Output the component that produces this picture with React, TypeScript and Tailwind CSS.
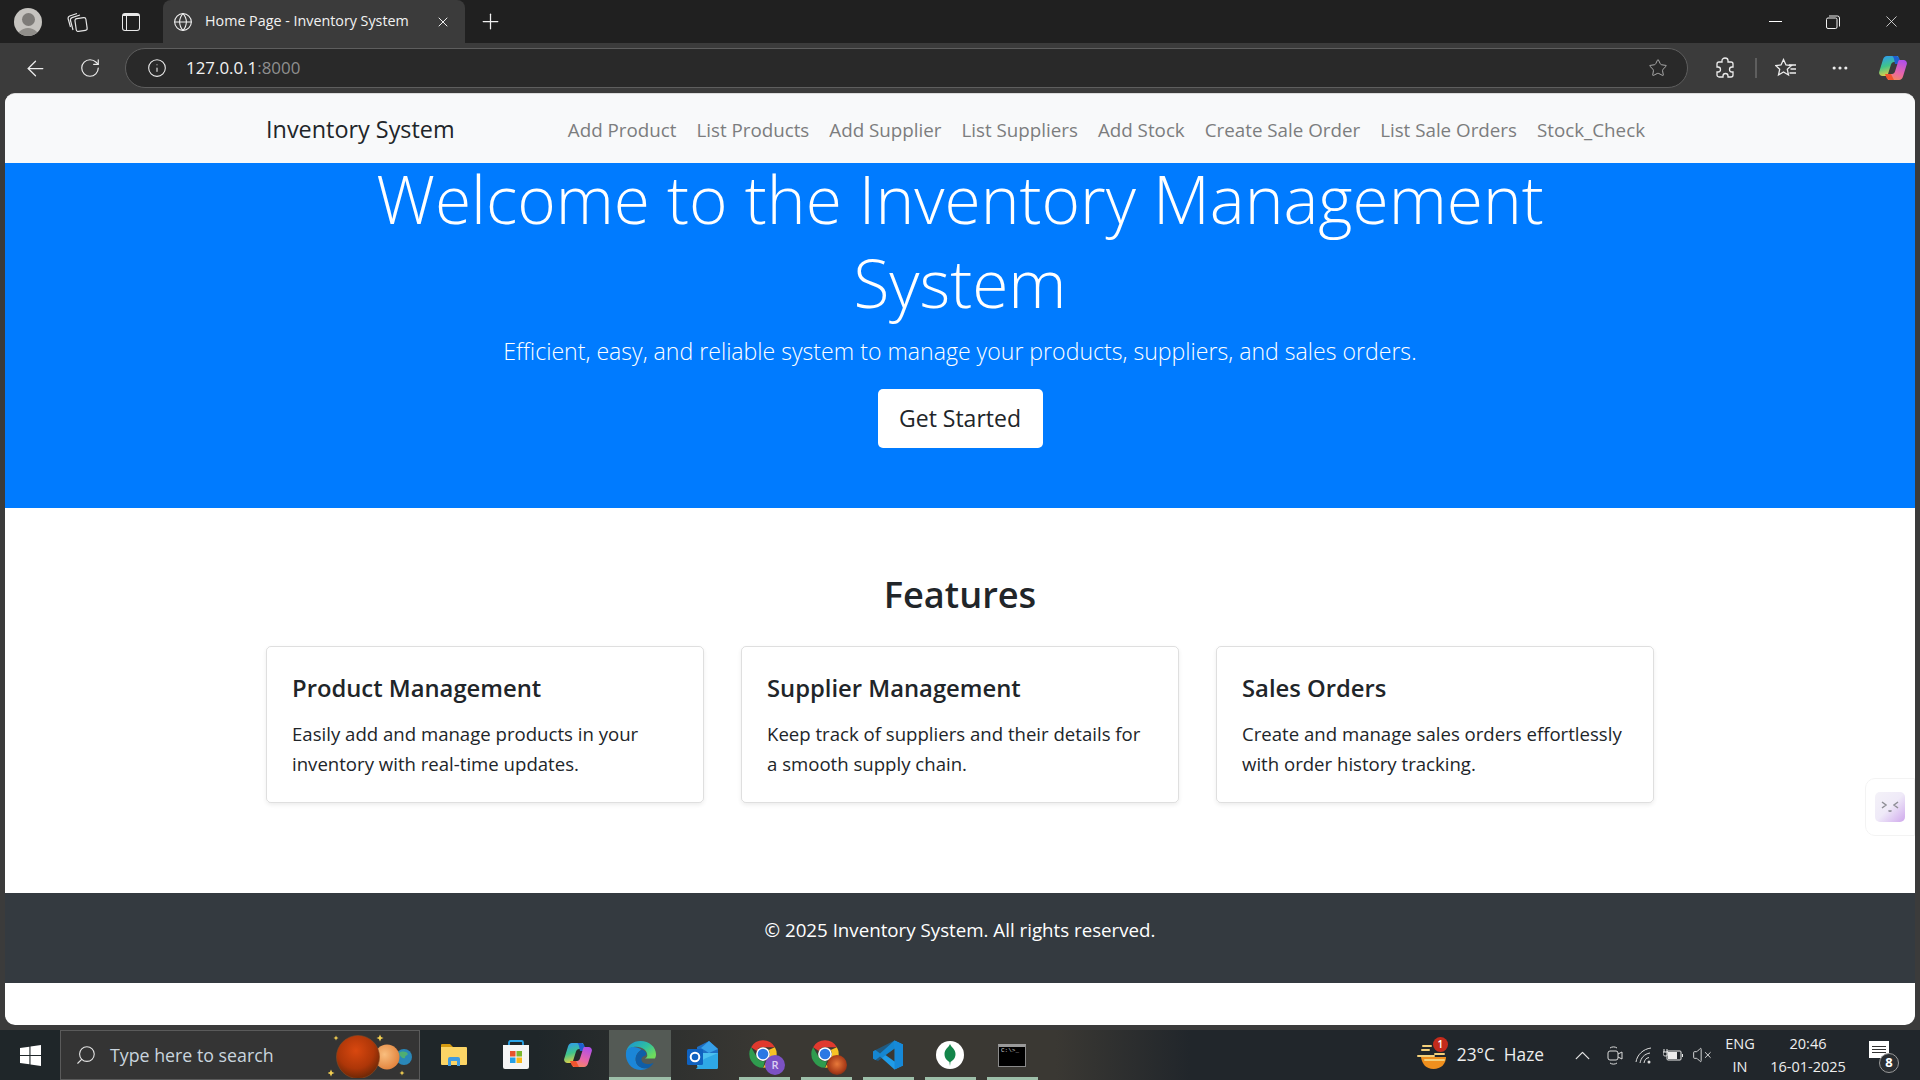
import { ArrowLeft, ChevronUp, Globe, Info, MoreHorizontal, Plus, RotateCw, Search, Star, VolumeX, X } from "lucide-react";

const font = "font-['Open_Sans','Liberation_Sans',sans-serif]";

const navLinks = ["Add Product", "List Products", "Add Supplier", "List Suppliers", "Add Stock", "Create Sale Order", "List Sale Orders", "Stock_Check"];

const features = [
  { title: "Product Management", lines: ["Easily add and manage products in your", "inventory with real-time updates."] },
  { title: "Supplier Management", lines: ["Keep track of suppliers and their details for", "a smooth supply chain."] },
  { title: "Sales Orders", lines: ["Create and manage sales orders effortlessly", "with order history tracking."] },
];

const CopilotLogo = ({ size, id }: { size: number; id: string }) => (
  <svg width={size} height={size} viewBox="0 0 28 28">
    <defs>
      <linearGradient id={`${id}a`} x1="0.2" y1="0" x2="0.5" y2="1">
        <stop offset="0" stopColor="#2f9bf0" />
        <stop offset="0.5" stopColor="#3fc48a" />
        <stop offset="1" stopColor="#f4d03f" />
      </linearGradient>
      <linearGradient id={`${id}b`} x1="0.7" y1="0" x2="0.3" y2="1">
        <stop offset="0" stopColor="#b04fe8" />
        <stop offset="0.6" stopColor="#e866a8" />
        <stop offset="1" stopColor="#f58a5a" />
      </linearGradient>
    </defs>
    <path d="M8 2h11l2 6h-6c-1.500 0-2.500 1-3 2.500L9 20c-.5 1.500-1.500 2-3 2H3.500C1 22-.5 20 .3 17.500L4 5.500C4.700 3.300 6 2 8 2z" fill={`url(#${id}a)`} />
    <path d="M13 2h4c1.500 0 2.800 1 3.300 2.500L22 10h-6l-1-5c-.3-1.500-1-3-2-3z" fill="#1f5fd0" />
    <path d="M20 6h4.500C27 6 28.500 8 27.700 10.500L24 22.500c-.7 2.200-2 3.500-4 3.500H9l-2-6h6c1.500 0 2.500-1 3-2.500L19 8c.2-.8.500-1.500 1-2z" fill={`url(#${id}b)`} />
    <path d="M6 20h6l3 6h-3.500C9 26 7.500 24.500 7 22.500z" fill="#f0542e" />
  </svg>
);

const Edge = () => (
  <svg width="31" height="31" viewBox="0 0 32 32">
    <defs>
      <linearGradient id="edgeTop" x1="0" y1="0" x2="1" y2="0.7">
        <stop offset="0" stopColor="#1a8fd8" />
        <stop offset="0.6" stopColor="#2fc0a0" />
        <stop offset="1" stopColor="#6fdb5c" />
      </linearGradient>
    </defs>
    <path d="M16 1C8 1 2 6 1 13c2-4 6-6 11-6 6 0 11 4 11 9 0 1.500-1 2.500-2.500 3h10.300C31.500 18 32 17 32 15 32 7 25 1 16 1z" fill="url(#edgeTop)" />
    <path d="M1 13c-1 9 5 18 15 18 3 0 6-.8 8-2-5 1-11-1-12.500-6C10 18 12 13 17 10c-7-5-15-3-16 3z" fill="#1b86d8" />
    <path d="M17 10c-5 3-7 8-5.500 13 1.500 5 7.500 7 12.500 6 2.500-1.500 4.500-3.500 5.500-5.500-4 2.500-12 2-12.500-3-.2-2.500 1.500-3.500 3-4 2-.8 3-2.500 1-4.500-1-1-2.500-2-4-2z" fill="#0f5ea8" />
  </svg>
);

const Outlook = () => (
  <svg width="31" height="28" viewBox="0 0 31 28">
    <path d="M10 6 22 0l9 8v6H10z" fill="#1d6fc4" />
    <path d="M22 0l9 8-9 4-8-5z" fill="#37a0e8" />
    <path d="M10 12h21v14a2 2 0 0 1-2 2H14c-2 0-4-2-4-4z" fill="#4cc0f0" />
    <path d="M17 18l14-6v14a2 2 0 0 1-2 2H9z" fill="#2ea8e6" />
    <rect x="0" y="8" width="16" height="16" rx="1.500" fill="#0f62c0" />
    <circle cx="8" cy="16" r="4.300" fill="none" stroke="#fff" strokeWidth="2" />
  </svg>
);

const Chrome = ({ badge }: { badge: "r" | "photo" }) => (
  <div className="relative w-[32px] h-[32px]">
    <svg width="30" height="30" viewBox="0 0 48 48">
      <path d="M24 2a22 22 0 0 1 19 11H24a11 11 0 0 0-10 6L5 13A22 22 0 0 1 24 2z" fill="#e0392e" />
      <path d="M43 13a22 22 0 0 1-19 33l9.500-16.500A11 11 0 0 0 33 17.500z" fill="#f7c325" />
      <path d="M5 13l9.500 16.500A11 11 0 0 0 27 35l-3 11A22 22 0 0 1 5 13z" fill="#2f9c4e" />
      <circle cx="24" cy="24" r="11" fill="#fff" />
      <circle cx="24" cy="24" r="8.500" fill="#2b78e4" />
    </svg>
    {badge === "r" ? (
      <span className={`absolute right-[-5px] bottom-[-4px] w-[20px] h-[20px] rounded-full bg-[#7c52c4] text-[#dcd0f5] text-[11px] font-semibold flex items-center justify-center ${font}`}>R</span>
    ) : (
      <span className="absolute right-[-5px] bottom-[-4px] w-[20px] h-[20px] rounded-full bg-[radial-gradient(circle_at_50%_45%,#e8793a,#a83b18_60%,#3b2018)]" />
    )}
  </div>
);

const VsCode = () => (
  <svg width="30" height="30" viewBox="0 0 30 30">
    <path d="M21.500 0.500 30 4.500v21l-8.500 4L7 16.500l-4.500 3.500L0 18.500v-7L2.500 10 7 13.500z" fill="#1f9ce8" />
    <path d="M21.500.5 30 4.500v21l-8.500 4z" fill="#1689d8" />
    <path d="M21.500 8.500 12.500 15l9 6.500z" fill="#3a3833" />
    <path d="M0 11.500 2.500 10l19-9.500V8.500L5 21l-2.500-1L0 18.500z" fill="#0d74bd" opacity="0.55" />
  </svg>
);

const Mongo = () => (
  <div className="w-[28px] h-[28px] rounded-full bg-white flex items-center justify-center">
    <svg width="12" height="22" viewBox="0 0 12 22">
      <path d="M6 0c1 3 5.500 5 5.500 10S8 17 6.500 18L6 22l-.6-4C4 17 .5 15 .5 10S5 3 6 0z" fill="#13854a" />
    </svg>
  </div>
);

const Cmd = () => (
  <div className="w-[28px] h-[23px] bg-black border border-[#8a8a8a] border-t-[3px] border-t-[#9a9a9a] pl-[2px] leading-none">
    <span className="block text-[6px] text-[#cfcfcf] font-['Liberation_Mono',monospace] leading-[8px]">C:\&gt;_</span>
  </div>
);

const Folder = () => (
  <svg width="26" height="24" viewBox="0 0 26 24">
    <path d="M0 2a1 1 0 0 1 1-1h8l3 3h-12z" fill="#d49a10" />
    <path d="M0 4h25a1 1 0 0 1 1 1v16a1 1 0 0 1-1 1H1a1 1 0 0 1-1-1z" fill="#fbd465" />
    <path d="M7 23v-7a2 2 0 0 1 2-2h8a2 2 0 0 1 2 2v7h-3v-5h-6v5z" fill="#3f9be0" />
  </svg>
);

const Store = () => (
  <svg width="28" height="30" viewBox="0 0 28 30">
    <path d="M7 5V2.500A1.500 1.500 0 0 1 8.500 1h11A1.500 1.500 0 0 1 21 2.500V5" fill="none" stroke="#2aa4e8" strokeWidth="1.800" />
    <path d="M1 5h26v22a2 2 0 0 1-2 2H3a2 2 0 0 1-2-2z" fill="#f5f5f5" />
    <rect x="8" y="11" width="5.500" height="5.500" fill="#e8532e" />
    <rect x="14.500" y="11" width="5.500" height="5.500" fill="#7cb82f" />
    <rect x="8" y="17.500" width="5.500" height="5.500" fill="#25a0e8" />
    <rect x="14.500" y="17.500" width="5.500" height="5.500" fill="#fab818" />
  </svg>
);

const Planets = () => (
  <svg width="84" height="46" viewBox="0 0 84 46">
    <defs>
      <radialGradient id="mars" cx="0.45" cy="0.35" r="0.7">
        <stop offset="0" stopColor="#d9480f" />
        <stop offset="0.6" stopColor="#ad3608" />
        <stop offset="1" stopColor="#5f2406" />
      </radialGradient>
      <radialGradient id="venus" cx="0.4" cy="0.4" r="0.7">
        <stop offset="0" stopColor="#f9be7e" />
        <stop offset="1" stopColor="#e07d36" />
      </radialGradient>
    </defs>
    <circle cx="76" cy="25" r="8" fill="#2a87b8" />
    <path d="M71 21c3-2 7-2 9 1-1 2-3 1-3 4-2 1-5-1-6-5z" fill="#4fae72" />
    <circle cx="59" cy="25" r="12.500" fill="url(#venus)" />
    <circle cx="30" cy="25" r="21.500" fill="url(#mars)" stroke="#8c4a22" strokeWidth="0.600" />
    {[[8, 6, 2.500], [52, 6, 3.500], [3, 41, 3.500], [74, 41, 2.500]].map(([x, y, r]) => (
      <path key={x} d={`M${x} ${y - r}L${x + r * 0.3} ${y - r * 0.3}L${x + r} ${y}L${x + r * 0.3} ${y + r * 0.3}L${x} ${y + r}L${x - r * 0.3} ${y + r * 0.3}L${x - r} ${y}L${x - r * 0.3} ${y - r * 0.3}Z`} fill="#f3cf52" />
    ))}
  </svg>
);

const Weather = () => (
  <div className="relative w-[30px] h-[30px]">
    <svg width="30" height="30" viewBox="0 0 30 30">
      <path d="M4 17h25c0 7-5 12-12.500 12S5 24 4 17z" fill="#ef8f1d" />
      <path d="M6 6h8M5 10h7M1 16h16M8 20h19" stroke="#f3cf7a" strokeWidth="2" strokeLinecap="round" />
      <path d="M18 14h9" stroke="#f3cf7a" strokeWidth="2" strokeLinecap="round" />
    </svg>
    <span className={`absolute right-[-1px] top-[-3px] w-[15px] h-[15px] rounded-full bg-[#c42b1c] text-white text-[10px] font-semibold flex items-center justify-center ${font}`}>1</span>
  </div>
);

const taskIcons = [
  { el: <Folder />, open: false },
  { el: <Store />, open: false },
  { el: <CopilotLogo size={28} id="cpt" />, open: false },
  { el: <Edge />, open: false, active: true },
  { el: <Outlook />, open: false },
  { el: <Chrome badge="r" />, open: true },
  { el: <Chrome badge="photo" />, open: true },
  { el: <VsCode />, open: true },
  { el: <Mongo />, open: true },
  { el: <Cmd />, open: true },
];

export default function App() {
  return (
    <div className={`w-[1920px] h-[1080px] overflow-hidden flex flex-col bg-[#3b3b3b] ${font}`}>
      {/* title bar */}
      <div className="h-[43px] bg-[#202020] flex items-end text-white shrink-0">
        <div className="h-[43px] w-[56px] flex items-center justify-center">
          <div className="w-[28px] h-[28px] rounded-full bg-[#c5c3bf] overflow-hidden flex flex-col items-center">
            <div className="w-[13px] h-[13px] rounded-full bg-[#7d7b78] mt-[5px] shrink-0" />
            <div className="w-[24px] h-[14px] rounded-t-full bg-[#908e8a] mt-[2px] shrink-0" />
          </div>
        </div>
        <div className="h-[43px] w-[44px] flex items-center justify-center">
          <svg width="22" height="22" viewBox="0 0 22 22" fill="none" stroke="#e4e4e4" strokeWidth="1.200">
            <rect x="8.500" y="7" width="11" height="13" rx="2" transform="rotate(-8 14 13)" />
            <path d="M6 19 3.500 9.500C3.200 8 4 7 5 6.600L13 4M3.500 16 1.200 8C.8 6.500 1.500 5.500 2.700 5L10 2.500" />
          </svg>
        </div>
        <div className="h-[43px] w-[62px] flex items-center justify-center">
          <div className="w-[18px] h-[18px] rounded-[3px] border border-[#e8e8e8] border-t-[3px] flex">
            <div className="w-[4px] border-r border-[#e8e8e8]" />
          </div>
        </div>
        <div className="h-[43px] w-[302px] ml-px bg-[#3b3b3b] rounded-t-[8px] flex items-center pl-[10px] pr-[14px]">
          <Globe size={20} strokeWidth={1.3} className="text-[#f0f0f0]" />
          <span className="ml-[12px] pb-[2px] text-[14.300px] text-[#f2f2f2] whitespace-nowrap">Home Page - Inventory System</span>
          <X size={16} strokeWidth={1.5} className="ml-auto text-[#f0f0f0]" />
        </div>
        <div className="h-[43px] w-[50px] flex items-center justify-center">
          <Plus size={25} strokeWidth={1.2} className="text-[#f0f0f0]" />
        </div>
        <div className="ml-auto h-[43px] flex items-center text-[#f0f0f0]">
          <div className="w-[58px] flex justify-center"><div className="w-[13px] h-px bg-white" /></div>
          <div className="w-[58px] flex justify-center">
            <svg width="14" height="14" viewBox="0 0 14 14" fill="none" stroke="#f0f0f0" strokeWidth="1">
              <rect x="0.500" y="3" width="10.500" height="10.500" rx="1.500" />
              <path d="M3 1h8.500a2 2 0 0 1 2 2v8.500" />
            </svg>
          </div>
          <div className="w-[58px] flex justify-center"><X size={19} strokeWidth={1} /></div>
        </div>
      </div>

      {/* toolbar */}
      <div className="h-[50px] flex items-center shrink-0 text-[#ececec]">
        <div className="w-[70px] flex justify-center"><ArrowLeft size={25} strokeWidth={1.2} /></div>
        <div className="w-[40px] flex justify-center"><RotateCw size={22} strokeWidth={1.3} /></div>
        <div className="ml-[15px] w-[1563px] h-[40px] rounded-full bg-[#292929] border border-[#5e5e5e] flex items-center pl-[21px] pr-[19px]">
          <Info size={20} strokeWidth={1.3} />
          <span className="ml-[19px] text-[16.900px] text-[#f2f2f2]">127.0.0.1<span className="text-[#8f8f8f]">:8000</span></span>
          <Star size={20} strokeWidth={1.2} className="ml-auto text-[#a8a8a8]" />
        </div>
        <div className="ml-[7px] w-[60px] flex justify-center">
          <svg width="20" height="22" viewBox="0 0 20 22" fill="none" stroke="#ececec" strokeWidth="1.300">
            <path d="M7 3.500C7 2 8.500 1 10 1s3 1 3 2.500V5h3a2 2 0 0 1 2 2v3h-1c-1.500 0-2.500 1-2.500 2.500S15.500 15 17 15h1v3a2 2 0 0 1-2 2h-3v-1c0-1.500-1-2.500-2.500-2.500S8 17.500 8 19v1H4a2 2 0 0 1-2-2v-3h1c1.500 0 2.500-1 2.500-2.500S4.500 10 3 10H2V7a2 2 0 0 1 2-2h3z" />
          </svg>
        </div>
        <div className="w-[1.500px] h-[20px] bg-[#5e5e5e] mr-[12px]" />
        <div className="w-[34px] flex justify-center">
          <svg width="22" height="20" viewBox="0 0 22 20" fill="none" stroke="#ececec" strokeWidth="1.300">
            <path d="M8.500 1.500 11 7l5.500.5-4.200 3.800L13.500 17 8.500 14 3.500 17l1.200-5.700L.8 7.500 6 7z" />
            <path d="M14 7h7M15.500 11h5.500M14.500 15h6.500" />
          </svg>
        </div>
        <div className="w-[75px] flex justify-center"><MoreHorizontal size={20} strokeWidth={1.800} /></div>
        <div className="w-[30px] flex justify-center"><CopilotLogo size={28} id="cpb" /></div>
      </div>

      {/* page */}
      <div className="relative mx-[5px] h-[932px] rounded-t-[10px] rounded-b-[10px] overflow-hidden bg-white flex flex-col shrink-0 border-t border-[#dcdcdc]">
        <nav className="h-[69px] bg-[#f8f9fa] flex items-center pl-[261px] pr-[270px] pt-[2px] shrink-0">
          <span className="text-[23.400px] text-[#212529] whitespace-nowrap">Inventory System</span>
          <div className="ml-auto pt-[1px] flex gap-[20px] text-[18.770px] text-[#7c7d7e] whitespace-nowrap">
            {navLinks.map((l) => (
              <span key={l}>{l}</span>
            ))}
          </div>
        </nav>

        <section className="h-[345px] bg-[#007bff] text-white flex flex-col items-center shrink-0">
          <h1 className="-mt-[6px] text-[65.800px] leading-[84px] font-light text-center">
            Welcome to the Inventory Management
            <br />
            System
          </h1>
          <p className="mt-[8px] text-[23.100px] leading-[36px] font-light">Efficient, easy, and reliable system to manage your products, suppliers, and sales orders.</p>
          <button className="mt-[20px] w-[165px] h-[59px] bg-white rounded-[5px] text-[23px] text-[#212529]">Get Started</button>
        </section>

        <section className="h-[385px] shrink-0 flex flex-col items-center">
          <h2 className="mt-[60px] text-[36.200px] leading-[52px] font-semibold text-[#212529]">Features</h2>
          <div className="mt-[26px] grid grid-cols-3 gap-[37px] w-[1388px]">
            {features.map((f) => (
              <div key={f.title} className="h-[157px] rounded-[5px] border border-[rgba(0,0,0,0.125)] shadow-[0_2px_4px_rgba(0,0,0,0.075)] px-[25px] pt-[26px] text-[#212529]">
                <h3 className="text-[23.800px] leading-[30px] font-semibold">{f.title}</h3>
                <p className="mt-[16px] text-[18.600px] leading-[30px] whitespace-nowrap">
                  {f.lines[0]}
                  <br />
                  {f.lines[1]}
                </p>
              </div>
            ))}
          </div>
        </section>

        <footer className="h-[90px] bg-[#343a40] text-white text-[18.730px] flex items-center justify-center pb-[16px] shrink-0">© 2025 Inventory System. All rights reserved.</footer>

        <div className="absolute right-0 top-[684px] w-[50px] h-[58px] rounded-l-[10px] bg-white border border-[#f3f3f3] flex items-center justify-center">
          <div className="w-[30px] h-[30px] rounded-[5px] bg-gradient-to-br from-[#f4f2f8] via-[#efeaf8] to-[#cfa8ec] flex items-center justify-center">
            <svg width="18" height="12" viewBox="0 0 18 12" fill="none" stroke="#8f8f96" strokeWidth="1.500">
              <path d="M1 1l4 3-4 3M17 1l-4 3 4 3M7.500 9.500c1 1 2 1 3 0" />
            </svg>
          </div>
        </div>
      </div>

      {/* taskbar */}
      <div className="mt-[5px] h-[50px] shrink-0 flex items-stretch text-white bg-[linear-gradient(90deg,#1f2629_0%,#1f2629_28%,#3a3833_40%,#3a3833_55%,#21262b_62%,#21262b_100%)]">
        <div className="w-[60px] flex items-center justify-center">
          <svg width="21" height="21" viewBox="0 0 19 19" fill="#fff">
            <path d="M0 2.700 8.500 1.500V9H0zM9.500 1.400 19 0v9H9.500zM0 10h8.500v7.500L0 16.300zM9.500 10H19v9l-9.500-1.400z" />
          </svg>
        </div>
        <div className="w-[360px] bg-[#343434] border border-[#5a5a5a] flex items-center pl-[14px] relative">
          <Search size={22} strokeWidth={1.2} className="-scale-x-100 text-[#e4e4e4]" />
          <span className="ml-[13px] text-[17.800px] text-[#c9d4de] whitespace-nowrap">Type here to search</span>
          <div className="absolute right-[7px] top-[1px]"><Planets /></div>
        </div>
        <div className="ml-[3px] flex">
          {taskIcons.map((t, i) => (
            <div key={i} className={`w-[62px] relative flex items-center justify-center ${t.active ? "bg-[#545a55]" : ""}`}>
              {t.el}
              {t.active && <div className="absolute bottom-0 left-0 right-0 h-[3px] bg-[#9dbfa9]" />}
              {t.open && <div className="absolute bottom-0 left-[6px] right-[5px] h-[3px] bg-[#9dbfa9]" />}
            </div>
          ))}
        </div>

        <div className="ml-auto flex items-center pr-[21px]">
          <Weather />
          <span className="ml-[10px] text-[17.300px] whitespace-nowrap text-[#eeeeee]">23°C&nbsp; Haze</span>
          <ChevronUp size={25} strokeWidth={1.2} className="ml-[26px] text-[#e4e4e4]" />
          <svg width="16" height="20" viewBox="0 0 16 20" fill="none" stroke="#dcdcdc" strokeWidth="1" className="ml-[12px]">
            <rect x="1" y="6" width="10" height="9" rx="2" />
            <path d="M11 9l4-2v7l-4-2M3 3c2-1.500 5-1.500 7 0M3 18c2 1.500 5 1.500 7 0" />
          </svg>
          <svg width="17" height="17" viewBox="0 0 17 17" fill="none" stroke="#dcdcdc" strokeWidth="1" className="ml-[12px]">
            <path d="M1 15C2 8 8 2 16 1M5 16c1-5 4-9 10-10M9 16c.5-3 2-5 5-5.500" />
            <circle cx="14" cy="15" r="1.500" fill="#dcdcdc" stroke="none" />
          </svg>
          <svg width="20" height="14" viewBox="0 0 20 14" fill="none" stroke="#ececec" strokeWidth="1" className="ml-[11px]">
            <rect x="4" y="3" width="14" height="9" rx="1" />
            <rect x="5" y="4" width="9" height="7" fill="#ececec" stroke="none" />
            <path d="M19.500 6v3M1 1v3M4 1v3M0 4h5v2c0 1-1 2-2.500 2S0 7 0 6z" />
          </svg>
          <VolumeX size={20} strokeWidth={1.1} className="ml-[9px] text-[#e4e4e4]" />
          <div className="ml-[12px] w-[32px] flex flex-col items-center text-[14.500px] leading-[23px] text-[#eeeeee]">
            <span>ENG</span>
            <span>IN</span>
          </div>
          <div className="ml-[9px] w-[86px] flex flex-col items-center text-[14.500px] leading-[23px] text-[#eeeeee] whitespace-nowrap">
            <span>20:46</span>
            <span>16-01-2025</span>
          </div>
          <div className="relative ml-[18px] w-[30px] h-[30px]">
            <div className="w-[20px] h-[17px] mt-[1px] bg-white flex flex-col gap-[2px] justify-center px-[3px]">
              <div className="h-px bg-[#333]" />
              <div className="h-px bg-[#333]" />
              <div className="h-px bg-[#333]" />
            </div>
            <span className="absolute right-[0px] bottom-[-3px] w-[20px] h-[20px] rounded-full bg-[#2a2e32] border border-[#9a9a9a] text-[13px] font-bold flex items-center justify-center">8</span>
          </div>
        </div>
      </div>
    </div>
  );
}
